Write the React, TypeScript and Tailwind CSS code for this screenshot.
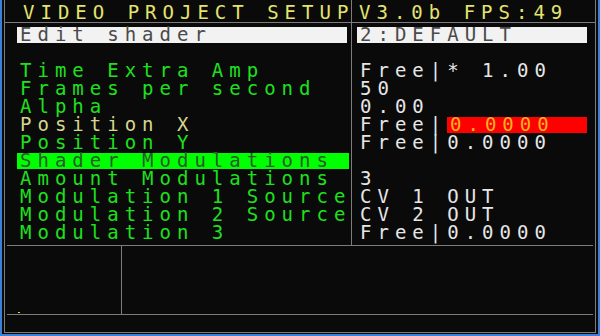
import React from "react";

const FONT = { fontFamily: '"DejaVu Sans Mono", "Liberation Mono", monospace' };

type L = { t: string; c?: "green" | "yellow" | "hi" | "box" | "empty" };
const left: L[] = [
  { t: "Edit shader", c: "box" },
  { t: "", c: "empty" },
  { t: "Time Extra Amp" },
  { t: "Frames per second" },
  { t: "Alpha" },
  { t: "Position X", c: "yellow" },
  { t: "Position Y" },
  { t: "Shader Modulations", c: "hi" },
  { t: "Amount Modulations" },
  { t: "Modulation 1 Source" },
  { t: "Modulation 2 Source" },
  { t: "Modulation 3" },
];

function Row({ children }: { children?: React.ReactNode }) {
  return <div className="h-[18px] py-[1px] whitespace-pre">{children}</div>;
}

const cell = "h-[16px] leading-[15px] pl-[3px]";

export default function App() {
  return (
    <div
      className="w-[600px] h-[336px] bg-[#3d7fd6] px-[2px] pb-[2px] text-[19px] tracking-[6px] overflow-hidden"
      style={FONT}
    >
      <div className="w-full h-full bg-[#0a0a0a] pl-[2px] pr-[2px] pb-[1px]">
        <div className="w-full h-full border-l border-r border-b border-[#7c7c7c] flex flex-col">
          {/* top section */}
          <div className="h-[246px] flex mx-[2px] border-b border-[#7c7c7c]">
            {/* left col */}
            <div className="w-[345px] border-r border-[#7c7c7c]">
              <div className="h-[23px] border-b border-[#7c7c7c] -mx-[2px] pl-[18px] text-[#e4e46c] leading-[25px] whitespace-pre">
                VIDEO PROJECT SETUP
              </div>
              <div className="mt-[3px] pl-[10px] pr-[2px]">
                {left.map((r, i) => {
                  if (r.c === "empty") return <Row key={i} />;
                  if (r.c === "box")
                    return (
                      <Row key={i}>
                        <div className={cell + " bg-[#f2f2f2] text-[#4a4a4a] mr-[2px]"}>{r.t}</div>
                      </Row>
                    );
                  if (r.c === "hi")
                    return (
                      <Row key={i}>
                        <div className={cell + " bg-[#00ff00] text-[#2c5a2c]"}>{r.t}</div>
                      </Row>
                    );
                  return (
                    <Row key={i}>
                      <div className={cell + (r.c === "yellow" ? " text-[#d6d68c]" : " text-[#1ee01e]")}>{r.t}</div>
                    </Row>
                  );
                })}
              </div>
            </div>
            {/* right col */}
            <div className="flex-1">
              <div className="h-[23px] border-b border-[#7c7c7c] -mr-[2px] pl-[7px] text-[#e4e46c] leading-[25px] whitespace-pre">
                V3.0b FPS:49
              </div>
              <div className="mt-[3px] pl-[5px] pr-[6px] text-[#e6e6e6]">
                <Row>
                  <div className={cell + " bg-[#f2f2f2] text-[#4a4a4a]"}>2:DEFAULT</div>
                </Row>
                <Row />
                <Row>
                  <div className={cell}>Free|* 1.00</div>
                </Row>
                <Row>
                  <div className={cell}>50</div>
                </Row>
                <Row>
                  <div className={cell}>0.00</div>
                </Row>
                <Row>
                  <div className={cell + " flex"}>
                    <span className="w-[87px]">Free|</span>
                    <span className="flex-1 bg-[#ff0000] text-[#ffb020] pl-[3px]">0.0000</span>
                  </div>
                </Row>
                <Row>
                  <div className={cell}>Free|0.0000</div>
                </Row>
                <Row />
                <Row>
                  <div className={cell}>3</div>
                </Row>
                <Row>
                  <div className={cell}>CV 1 OUT</div>
                </Row>
                <Row>
                  <div className={cell}>CV 2 OUT</div>
                </Row>
                <Row>
                  <div className={cell}>Free|0.0000</div>
                </Row>
              </div>
            </div>
          </div>
          {/* bottom section */}
          <div className="h-[69px] flex mx-[2px] border-b border-[#7c7c7c]">
            <div className="w-[115px] border-r border-[#7c7c7c] flex items-end pl-[11px] pb-[1px]">
              <div className="w-[2px] h-[1px] bg-[#d8d860]" />
            </div>
            <div className="flex-1" />
          </div>
          <div className="flex-1" />
        </div>
      </div>
    </div>
  );
}
